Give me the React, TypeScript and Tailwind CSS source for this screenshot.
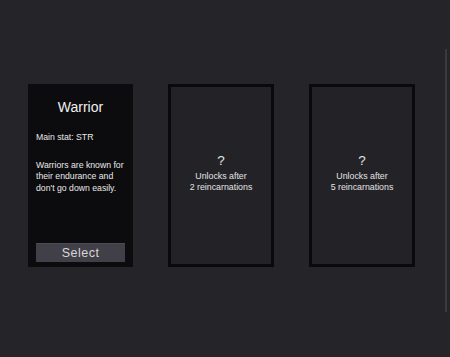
import React from "react";

function LockedCard({ n }: { n: number }) {
  return (
    <div className="w-[106px] h-[183px] border-[3px] border-[#0a0a0c] bg-[#232327] flex flex-col items-center justify-center pb-[5px] text-[#e4e4e4]">
      <div className="text-[13.5px] leading-[14px]">?</div>
      <div className="mt-[3px] text-[8.8px] leading-[11px] text-center">
        Unlocks after
        <br />
        {n} reincarnations
      </div>
    </div>
  );
}

export default function App() {
  return (
    <div
      className="w-[450px] h-[357px] bg-[#252529] flex overflow-hidden"
      style={{ fontFamily: '"Liberation Sans", Arial, sans-serif' }}
    >
      <div className="flex-1 flex items-start pt-[84px] pl-[28px] gap-[35px]">
        <div className="w-[105px] h-[183px] bg-[#0c0c0e] flex flex-col px-[8px] text-[#e8e8e8]">
          <div className="mt-[15px] text-center text-[14px] leading-[16px] text-[#f0f0f0]">Warrior</div>
          <div className="mt-[17px] text-[8.7px] leading-[11.5px]">Main stat: STR</div>
          <div className="mt-[16px] text-[8.7px] leading-[11.5px]">
            Warriors are known for
            <br />
            their endurance and
            <br />
            don't go down easily.
          </div>
          <div className="flex-1" />
          <button className="mb-[5px] h-[19px] w-full bg-[#413f48] border-t border-[#4c4b54] text-[12.5px] leading-[18px] tracking-[0.5px] text-[#d8d8d8]">
            Select
          </button>
        </div>
        <LockedCard n={2} />
        <LockedCard n={5} />
      </div>
      <div className="w-[2px] h-[263px] mt-[49px] mr-[3px] bg-[#3a3a3f]" />
    </div>
  );
}
